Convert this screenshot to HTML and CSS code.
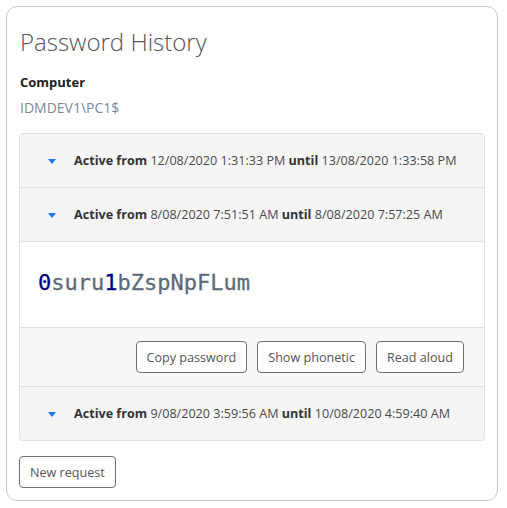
FILE: index.html
```html
<!DOCTYPE html>
<html>
<head>
<meta charset="utf-8">
<link rel="stylesheet" href="styles.css">
</head>
<body>
<div class="card">
  <h1 class="title">Password History</h1>
  <div class="label">Computer</div>
  <div class="value">IDMDEV1\PC1$</div>
  <div class="accordion">
    <div class="item">
      <div class="header"><span class="caret"></span><span><b>Active from</b> 12/08/2020 1:31:33 PM <b>until</b> 13/08/2020 1:33:58 PM</span></div>
    </div>
    <div class="item">
      <div class="header"><span class="caret"></span><span><b>Active from</b> 8/08/2020 7:51:51 AM <b>until</b> 8/08/2020 7:57:25 AM</span></div>
      <div class="body"><span class="pw"><span class="d">0</span>suru<span class="d">1</span>bZspNpFLum</span></div>
      <div class="footer">
        <button class="btn">Copy password</button>
        <button class="btn">Show phonetic</button>
        <button class="btn">Read aloud</button>
      </div>
    </div>
    <div class="item">
      <div class="header"><span class="caret"></span><span><b>Active from</b> 9/08/2020 3:59:56 AM <b>until</b> 10/08/2020 4:59:40 AM</span></div>
    </div>
  </div>
  <button class="btn new">New request</button>
</div>
</body>
</html>
```

FILE: styles.css
```css
html, body { margin: 0; padding: 0; background: #fff; }
body { font-family: "Open Sans", "Noto Sans", sans-serif; color: #444; }
.card {
  margin: 6px 9px 7px 6px;
  height: 495px;
  box-sizing: border-box;
  border: 1px solid #c8c8c8;
  border-radius: 11px;
  padding: 18px 12px 12px 12px;
}
.title {
  margin: 0 0 0 1px;
  font-weight: 300;
  font-size: 24px;
  line-height: 34px;
  color: #555;
}
.label {
  margin: 14px 0 0 1px;
  font-size: 13px;
  font-weight: 700;
  color: #222;
  line-height: 18px;
}
.value {
  margin: 7px 0 0 1px;
  font-size: 14px;
  color: #7a8a98;
  line-height: 20px;
}
.accordion {
  margin-top: 15px;
  border: 1px solid #e0e0e0;
  border-radius: 4px;
  overflow: hidden;
}
.item + .item { border-top: 1px solid #e0e0e0; }
.header {
  background: #f5f5f5;
  height: 53px;
  display: flex;
  align-items: center;
  padding-left: 28px;
  font-size: 12.6px;
  color: #4a4a4a;
}
.header b { color: #333; }
.caret {
  width: 0;
  height: 0;
  border-left: 4.5px solid transparent;
  border-right: 4.5px solid transparent;
  border-top: 5px solid #1f7aef;
  margin-right: 18px;
  margin-top: 1px;
}
.body {
  border-top: 1px solid #e0e0e0;
  background: #fff;
  height: 86px;
  box-sizing: border-box;
  padding-bottom: 5px;
  display: flex;
  align-items: center;
  padding-left: 18px;
}
.pw {
  font-family: "DejaVu Sans Mono", monospace;
  font-size: 22px;
  color: #5c6b7a;
  -webkit-text-stroke: 0.3px currentColor;
}
.pw .d { color: #000080; }
.footer {
  border-top: 1px solid #e0e0e0;
  background: #f8f8f8;
  height: 58px;
  display: flex;
  align-items: center;
  justify-content: flex-end;
  gap: 10px;
  padding-right: 20px;
}
.btn {
  font-family: "Open Sans", "Noto Sans", sans-serif;
  font-size: 12.6px;
  color: #555;
  background: #fff;
  border: 1px solid #707070;
  border-radius: 4px;
  height: 32px;
  padding: 0 10px;
}
.new { margin-top: 15px; height: 32px; }
```
